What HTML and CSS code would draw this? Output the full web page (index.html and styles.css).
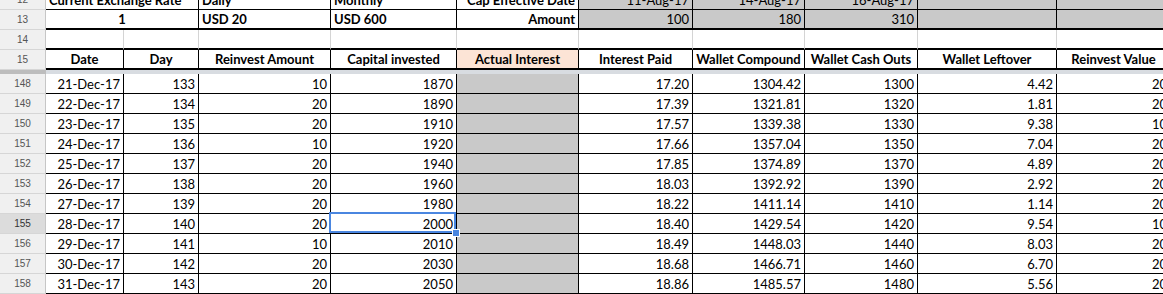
FILE: index.html
```html
<!DOCTYPE html>
<html>
<head>
<meta charset="utf-8">
<link rel="stylesheet" href="styles.css">
</head>
<body>
<div class="sheet">
  <div class="row top r12">
    <div class="rh">12</div>
    <div class="c span2 b left">Current Exchange Rate</div>
    <div class="c b left">Daily</div>
    <div class="c b left">Monthly</div>
    <div class="c b right">Cap Effective Date</div>
    <div class="c g right">11-Aug-17</div>
    <div class="c g right">14-Aug-17</div>
    <div class="c g right">16-Aug-17</div>
    <div class="c g"></div>
    <div class="c g"></div>
  </div>
  <div class="row top thick">
    <div class="rh">13</div>
    <div class="c span2 b center">1</div>
    <div class="c b left">USD 20</div>
    <div class="c b left">USD 600</div>
    <div class="c b right">Amount</div>
    <div class="c g right">100</div>
    <div class="c g right">180</div>
    <div class="c g right">310</div>
    <div class="c g"></div>
    <div class="c g"></div>
  </div>
  <div class="row blank thick">
    <div class="rh">14</div>
    <div class="c"></div><div class="c"></div><div class="c"></div><div class="c"></div><div class="c"></div><div class="c"></div><div class="c"></div><div class="c"></div><div class="c"></div><div class="c"></div>
  </div>
  <div class="row head thick">
    <div class="rh">15</div>
    <div class="c b center">Date</div>
    <div class="c b center">Day</div>
    <div class="c b center">Reinvest Amount</div>
    <div class="c b center">Capital invested</div>
    <div class="c b center peach">Actual Interest</div>
    <div class="c b center">Interest Paid</div>
    <div class="c b center">Wallet Compound</div>
    <div class="c b center">Wallet Cash Outs</div>
    <div class="c b center">Wallet Leftover</div>
    <div class="c b center">Reinvest Value</div>
  </div>
  <div class="band"><div class="band-rh"></div><div class="band-c"></div></div>

  <div class="row data"><div class="rh">148</div><div class="c right">21-Dec-17</div><div class="c right">133</div><div class="c right">10</div><div class="c right">1870</div><div class="c g"></div><div class="c right">17.20</div><div class="c right">1304.42</div><div class="c right">1300</div><div class="c right">4.42</div><div class="c right">20</div></div>
  <div class="row data"><div class="rh">149</div><div class="c right">22-Dec-17</div><div class="c right">134</div><div class="c right">20</div><div class="c right">1890</div><div class="c g"></div><div class="c right">17.39</div><div class="c right">1321.81</div><div class="c right">1320</div><div class="c right">1.81</div><div class="c right">20</div></div>
  <div class="row data"><div class="rh">150</div><div class="c right">23-Dec-17</div><div class="c right">135</div><div class="c right">20</div><div class="c right">1910</div><div class="c g"></div><div class="c right">17.57</div><div class="c right">1339.38</div><div class="c right">1330</div><div class="c right">9.38</div><div class="c right">10</div></div>
  <div class="row data"><div class="rh">151</div><div class="c right">24-Dec-17</div><div class="c right">136</div><div class="c right">10</div><div class="c right">1920</div><div class="c g"></div><div class="c right">17.66</div><div class="c right">1357.04</div><div class="c right">1350</div><div class="c right">7.04</div><div class="c right">20</div></div>
  <div class="row data"><div class="rh">152</div><div class="c right">25-Dec-17</div><div class="c right">137</div><div class="c right">20</div><div class="c right">1940</div><div class="c g"></div><div class="c right">17.85</div><div class="c right">1374.89</div><div class="c right">1370</div><div class="c right">4.89</div><div class="c right">20</div></div>
  <div class="row data"><div class="rh">153</div><div class="c right">26-Dec-17</div><div class="c right">138</div><div class="c right">20</div><div class="c right">1960</div><div class="c g"></div><div class="c right">18.03</div><div class="c right">1392.92</div><div class="c right">1390</div><div class="c right">2.92</div><div class="c right">20</div></div>
  <div class="row data"><div class="rh">154</div><div class="c right">27-Dec-17</div><div class="c right">139</div><div class="c right">20</div><div class="c right">1980</div><div class="c g"></div><div class="c right">18.22</div><div class="c right">1411.14</div><div class="c right">1410</div><div class="c right">1.14</div><div class="c right">20</div></div>
  <div class="row data"><div class="rh sel">155</div><div class="c right">28-Dec-17</div><div class="c right">140</div><div class="c right">20</div><div class="c right active">2000<span class="selbox"></span><span class="handle"></span></div><div class="c g"></div><div class="c right">18.40</div><div class="c right">1429.54</div><div class="c right">1420</div><div class="c right">9.54</div><div class="c right">10</div></div>
  <div class="row data"><div class="rh">156</div><div class="c right">29-Dec-17</div><div class="c right">141</div><div class="c right">10</div><div class="c right">2010</div><div class="c g"></div><div class="c right">18.49</div><div class="c right">1448.03</div><div class="c right">1440</div><div class="c right">8.03</div><div class="c right">20</div></div>
  <div class="row data"><div class="rh">157</div><div class="c right">30-Dec-17</div><div class="c right">142</div><div class="c right">20</div><div class="c right">2030</div><div class="c g"></div><div class="c right">18.68</div><div class="c right">1466.71</div><div class="c right">1460</div><div class="c right">6.70</div><div class="c right">20</div></div>
  <div class="row data"><div class="rh">158</div><div class="c right">31-Dec-17</div><div class="c right">143</div><div class="c right">20</div><div class="c right">2050</div><div class="c g"></div><div class="c right">18.86</div><div class="c right">1485.57</div><div class="c right">1480</div><div class="c right">5.56</div><div class="c right">20</div></div>
</div>
</body>
</html>
```
FILE: styles.css
```css
html, body {
  margin: 0;
  padding: 0;
  background: #fff;
  overflow: hidden;
}
body {
  width: 1163px;
  height: 294px;
  font-family: Lato, "Liberation Sans", sans-serif;
  font-size: 13px;
  color: #000;
}
.sheet {
  margin-top: -10px;
  width: 1171px;
}
.row {
  display: grid;
  grid-template-columns: 46px 78px 75px 132px 126px 122px 114px 112px 113px 139px 114px;
  height: 20px;
}
.rh {
  box-sizing: border-box;
  background: #f0f0f0;
  border-right: 1px solid #c6c6c6;
  border-bottom: 1px solid #d6d6d6;
  font-family: "Liberation Sans", sans-serif;
  font-size: 10px;
  color: #555;
  text-align: center;
  line-height: 19px;
}
.rh.sel {
  background: #dcdcdc;
  color: #333;
}
.c {
  box-sizing: border-box;
  border-right: 1px solid #000;
  border-bottom: 1px solid #000;
  padding: 0 3px 1px 3px;
  white-space: nowrap;
  overflow: hidden;
  display: flex;
  align-items: flex-end;
  line-height: 15px;
}
.span2 { grid-column: span 2; }
.b { font-weight: bold; }
.left { justify-content: flex-start; }
.right { justify-content: flex-end; }
.center { justify-content: center; }
.g { background: #c9c9c9; }
.peach { background: #fce4d6; }

.thick .c { border-bottom-width: 2px; }
.top.thick .c { padding-bottom: 1px; }
.blank .c { border-right-color: #d4d4d4; }

.band {
  display: flex;
  height: 4px;
}
.band-rh {
  width: 46px;
  background: #bdbdbd;
}
.band-c {
  flex: 1;
  background: #d8dce1;
}

.data .c { padding-bottom: 1px; }
.active {
  position: relative;
  overflow: visible;
}
.selbox {
  position: absolute;
  left: -2px;
  top: -2px;
  right: 0;
  bottom: 0;
  border: 2px solid #4a86e0;
  pointer-events: none;
}
.handle {
  position: absolute;
  right: -3px;
  bottom: -3px;
  width: 6px;
  height: 6px;
  background: #4a86e0;
  box-shadow: 0 0 0 1px #fff;
}
```
